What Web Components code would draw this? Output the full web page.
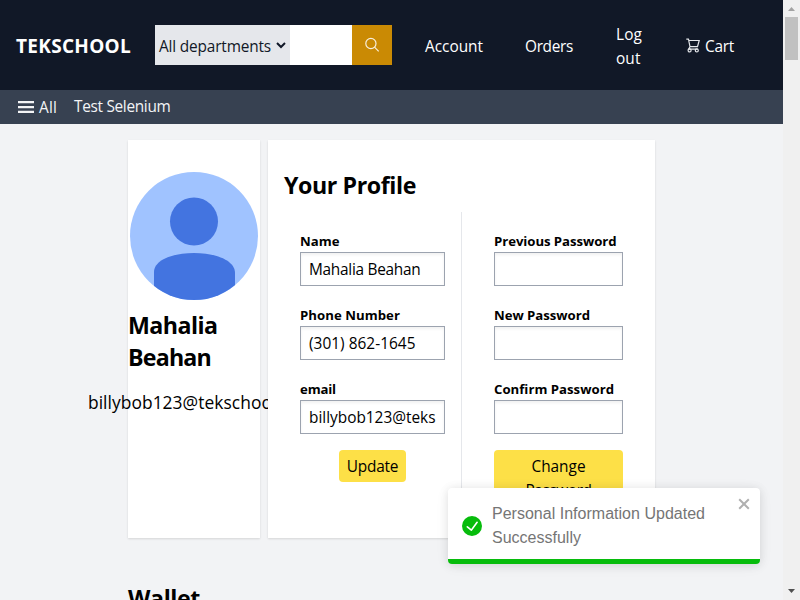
<!DOCTYPE html>
<html lang="en">
<head>
<meta charset="utf-8">
<title>TEKSCHOOL</title>
<style>
html,body{margin:0;height:100%;overflow:hidden;background:#f2f3f5;color:#000;font:15.4px/24px "Open Sans","Noto Sans",sans-serif}
</style>
</head>
<body>
<shop-page></shop-page>
<script>
const define = (name, html, setup) => customElements.define(name, class extends HTMLElement {
  connectedCallback() {
    if (this.shadowRoot) return;
    const t = document.createElement('template');
    t.innerHTML = html;
    this.attachShadow({mode: 'open'}).append(t.content.cloneNode(true));
    if (setup) setup(this, this.shadowRoot);
  }
});

// One line of text whose tracking is adjusted to a given width.
define('fit-text', `<style>:host{display:block;white-space:pre;width:max-content}span{display:inline-block}</style><span><slot></slot></span>`, (el, root) => {
  const span = root.querySelector('span');
  const w = Number(el.getAttribute('w'));
  const n = el.textContent.length;
  const natural = span.getBoundingClientRect().width;
  if (w && natural) { span.style.letterSpacing = (w - natural) / n + 'px'; }
});

define('search-bar', `<style>
:host{display:flex;width:237px;height:40px;flex:none}
.dept{width:135px;background:#e5e7eb;color:#111827;display:flex;align-items:center;box-sizing:border-box;padding:3px 0 0 4px;font-size:15.4px}
.dept svg{margin:-3px 0 0 5px}
.field{width:62px;background:#fff}
.go{width:40px;background:#ca8a04;display:flex;align-items:center;justify-content:center}
</style>
<div class="dept"><fit-text w="112">All departments</fit-text><svg width="10" height="7" viewBox="0 0 10 7"><path d="M1 1l4 4 4-4" fill="none" stroke="#111827" stroke-width="2"/></svg></div>
<div class="field"></div>
<div class="go"><svg width="16" height="16" viewBox="0 0 16 16" fill="none" stroke="#f8efdc" stroke-width="1.2"><circle cx="6.9" cy="6.5" r="5.1"/><path d="M10.5 10.2l4.2 4.2"/></svg></div>`);

define('site-header', `<style>
:host{display:flex;height:90px;background:#111827;color:#fff;align-items:center;box-sizing:border-box;padding-left:16px;flex:none}
.brand{font-size:19px;font-weight:700;width:139px;line-height:28px;padding-top:2px}
.links{display:grid;grid-template-columns:100px 91px 70px 60px;margin-left:33px;align-items:center;padding-top:3px}
.cart{display:flex;gap:5px;align-items:center}
.cart svg{margin-top:-3px}
</style>
<div class="brand"><fit-text w="115">TEKSCHOOL</fit-text></div>
<search-bar></search-bar>
<div class="links"><fit-text w="58">Account</fit-text><fit-text w="48">Orders</fit-text><div><fit-text w="26">Log</fit-text><fit-text w="24.5">out</fit-text></div>
<div class="cart"><svg width="14" height="15" viewBox="0 0 14 15" fill="none" stroke="#e5e7eb" stroke-width="1.2"><path d="M.3 1.2h2.1l.5 1.3h10.3L11.5 8.7H4L2.7 2.5M4 8.7L2.6 11.2h9.2"/><circle cx="3.6" cy="12.4" r="1.5"/><circle cx="10.8" cy="12.4" r="1.5"/></svg><fit-text w="29">Cart</fit-text></div></div>`);

define('category-bar', `<style>
:host{display:flex;height:34px;background:#374151;color:#f3f4f6;align-items:center;flex:none;padding-left:18px}
.menu{width:16px;height:12px;margin-right:5px}
fit-text{margin-top:2px}
fit-text + fit-text{margin-left:17px;margin-top:0}
</style><svg class="menu" viewBox="0 0 16 12" fill="#f3f4f6"><path d="M0 0h16v2.3H0zM0 4.9h16v2.3H0zM0 9.7h16v2.3H0z"/></svg><fit-text w="18">All</fit-text><fit-text w="96.5">Test Selenium</fit-text>`);

define('user-card', `<style>
:host{display:flex;flex-direction:column;align-items:center;background:#fff;width:132px;flex:none;box-sizing:border-box;padding-top:32px;box-shadow:0 1px 2px rgba(0,0,0,.12)}
svg{display:block;flex:none}
.name{font-size:23.2px;font-weight:700;line-height:32px;margin-top:9px;width:132px}
.mail{font-size:17.4px;line-height:28px;margin-top:15px}
</style>
<svg width="128" height="128" viewBox="0 0 128 128"><defs><clipPath id="c"><circle cx="64" cy="64" r="64"/></clipPath></defs><g clip-path="url(#c)"><path fill="#a0c3ff" d="M0 0h128v128H0z"/><g fill="#4374e0"><circle cx="64" cy="49.5" r="24"/><path d="M24 128v-28C24 88 43 81 64 81s41 7 41 20v27z"/></g></g></svg>
<div class="name"><fit-text w="89.5">Mahalia</fit-text><fit-text w="83">Beahan</fit-text></div>
<div class="mail"><fit-text w="212">billybob123@tekschool.us</fit-text></div>`);

define('form-field', `<style>
:host{display:block;margin-bottom:20px}
.label{font-size:13.2px;font-weight:700;line-height:18px;padding-bottom:2px}
.box{height:34px;box-sizing:border-box;border:1px solid #9ca3af;padding:5px 8px 3px;background:#fff;box-shadow:inset 0 2px 3px rgba(0,0,0,.06)}
.clip{overflow:hidden}
</style><div class="label"><slot name="label"></slot></div><div class="box"><div class="clip"><slot></slot></div></div>`);

define('action-button', `<style>
:host{display:flex;flex-direction:column;align-items:center;background:#fde047;border-radius:4px;padding:5px 8px 3px;box-sizing:border-box}
</style><slot></slot>`);

define('profile-card', `<style>
:host{display:block;background:#fff;width:387px;flex:none;box-sizing:border-box;padding:29px 16px 16px;box-shadow:0 1px 2px rgba(0,0,0,.12);position:relative}
.title{font-size:23.2px;font-weight:700;line-height:32px;margin-bottom:11px}
.cols{display:flex;height:310px}
.col{box-sizing:border-box;padding:20px 16px 0}
.left{width:178px;border-right:1px solid #e5e7eb}
.right{width:177px;padding-left:32px}
.col form-field:last-of-type{margin-bottom:16px}
.left action-button{width:67px;margin-left:39px}
</style>
<div class="title"><fit-text w="132">Your Profile</fit-text></div>
<div class="cols">
<div class="col left">
<form-field><fit-text slot="label" w="39.5">Name</fit-text><fit-text w="111.5">Mahalia Beahan</fit-text></form-field>
<form-field><fit-text slot="label" w="100">Phone Number</fit-text><fit-text w="106.5">(301) 862-1645</fit-text></form-field>
<form-field><fit-text slot="label" w="36">email</fit-text><fit-text w="126.5">billybob123@teks</fit-text></form-field>
<action-button><fit-text w="51.5">Update</fit-text></action-button>
</div>
<div class="col right">
<form-field><fit-text slot="label" w="122.5">Previous Password</fit-text></form-field>
<form-field><fit-text slot="label" w="96">New Password</fit-text></form-field>
<form-field><fit-text slot="label" w="120">Confirm Password</fit-text></form-field>
<action-button><fit-text w="54">Change</fit-text><fit-text w="66">Password</fit-text></action-button>
</div></div>`);

define('toast-message', `<style>
:host{position:absolute;left:448px;top:488px;width:312px;height:76px;background:#fff;border-radius:4px;box-shadow:0 1px 10px rgba(0,0,0,.1),0 2px 15px rgba(0,0,0,.05);display:flex;flex-direction:column;overflow:hidden;color:#757575;font:16px/24px "Liberation Sans",Arial,sans-serif}
.row{display:flex;height:71px;box-sizing:border-box;padding:14px 10px 0 14px}
.ok{margin:14px 10px 0 0;flex:none}
.x{margin:-4px 0 0 auto;flex:none}
.bar{height:5px;background:#07bc0c}
</style><div class="row">
<svg class="ok" width="20" height="20" viewBox="0 0 24 24" fill="#07bc0c"><path d="M12 0a12 12 0 1012 12A12.014 12.014 0 0012 0zm6.927 8.2l-6.845 9.289a1.011 1.011 0 01-1.43.188l-4.888-3.908a1 1 0 111.25-1.562l4.076 3.261 6.227-8.451a1 1 0 111.61 1.183z"/></svg>
<div><fit-text w="213">Personal Information Updated</fit-text><fit-text w="89">Successfully</fit-text></div>
<svg class="x" width="12" height="12" viewBox="0 0 12 12" stroke="#b0b0b0" stroke-width="2"><path d="M1.2 1.2l9.6 9.6M10.8 1.2L1.2 10.8"/></svg>
</div><div class="bar"></div>`);

define('page-scrollbar', `<style>
:host{display:flex;flex-direction:column;justify-content:space-between;align-items:center;width:17px;background:#f0f0f0;flex:none;height:600px}
.thumb{width:13px;height:43px;background:#c1c1c1;margin-top:6px}
.top{display:flex;flex-direction:column;align-items:center;padding-top:7px}
svg{display:block}
.end{margin-bottom:7px}
</style><div class="top"><svg width="7" height="4"><path d="M0 4L3.5 0 7 4z" fill="#a3a3a3"/></svg><div class="thumb"></div></div><svg class="end" width="7" height="4"><path d="M0 0h7L3.5 4z" fill="#505050"/></svg>`);

define('shop-page', `<style>
:host{display:flex;width:800px;height:600px;overflow:hidden;position:relative}
.view{width:783px;display:flex;flex-direction:column;overflow:hidden}
.cards{display:flex;gap:8px;height:398px;margin:16px 0 0 128px;flex:none}
.wallet{font-size:23.2px;font-weight:700;line-height:32px;margin:44px 0 0 128px;flex:none}
</style>
<div class="view"><site-header></site-header><category-bar></category-bar>
<div class="cards"><user-card></user-card><profile-card></profile-card></div>
<div class="wallet"><fit-text w="72">Wallet</fit-text></div></div>
<page-scrollbar></page-scrollbar><toast-message></toast-message>`);
</script>
</body>
</html>
